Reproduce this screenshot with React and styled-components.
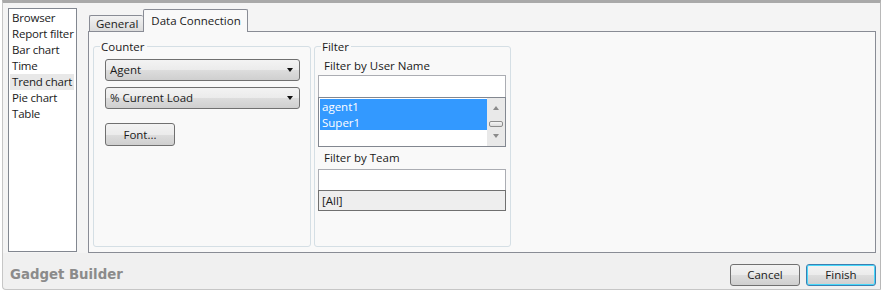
import React from 'react'
import styled, { createGlobalStyle, css } from 'styled-components'

const GlobalStyle = createGlobalStyle`
  html, body {
    margin: 0;
    padding: 0;
    background: #ffffff;
  }
  body {
    font-family: "Open Sans", "Noto Sans", sans-serif;
    font-size: 11.5px;
    color: #1a1a1a;
  }
`

const gradientControl = css`
  background: linear-gradient(#f3f3f3 0%, #ebebeb 50%, #dddddd 51%, #cfcfcf 100%);
  border: 1px solid #707070;
  border-radius: 3px;
  box-sizing: border-box;
`

const Window = styled.div`
  margin-left: 2px;
  width: 879px;
  height: 290px;
  box-sizing: border-box;
  border-top: 3px solid #a9a9a9;
  border-left: 1px solid #c6c6c6;
  border-right: 1px solid #b8b8b8;
  border-bottom: 1px solid #c6c6c6;
  border-bottom-left-radius: 4px;
  background: #f0f0f0;
  display: flex;
  flex-direction: column;
`

const Main = styled.div`
  display: flex;
  align-items: flex-start;
  padding: 5px 4px 0 5px;
  background: #f4f4f4;
`

const NavList = styled.ul`
  list-style: none;
  margin: 0;
  padding: 1px 1px;
  width: 69px;
  height: 244px;
  box-sizing: border-box;
  background: #ffffff;
  border: 1px solid #828790;
  overflow: hidden;
`

const NavItem = styled.li`
  height: 16px;
  line-height: 16px;
  padding-left: 2px;
  white-space: nowrap;
  letter-spacing: -0.2px;
  background: ${p => (p.$active ? '#e8e8e8' : 'transparent')};
  margin-right: 1px;
`

const TabArea = styled.div`
  margin-left: 11px;
  width: 788px;
  display: flex;
  flex-direction: column;
`

const TabStrip = styled.div`
  display: flex;
  align-items: flex-end;
  height: 23px;
  padding-left: 1px;
`

const Tab = styled.div`
  box-sizing: border-box;
  border: 1px solid #898c95;
  border-bottom: none;
  border-radius: 2px 2px 0 0;
  white-space: nowrap;
  ${p =>
    p.$selected
      ? css`
          height: 23px;
          padding: 2px 6px 0 7px;
          background: #f9f9f9;
          margin-bottom: -1px;
          position: relative;
          z-index: 1;
          line-height: 18px;
        `
      : css`
          height: 16px;
          padding: 0 5px 0 6px;
          background: linear-gradient(#f2f2f2, #dcdcdc);
          border-right: none;
          line-height: 15px;
        `}
`

const Panel = styled.div`
  height: 222px;
  box-sizing: border-box;
  border: 1px solid #898c95;
  background: #f9f9f9;
  display: flex;
  gap: 3px;
  padding: 7px 4px 5px 4px;
`

const Group = styled.fieldset`
  margin: 0;
  padding: 0;
  width: ${p => p.$width}px;
  box-sizing: border-box;
  border: 1px solid #d5dfe5;
  border-radius: 3px;
  min-width: 0;
`

const Legend = styled.legend`
  margin-left: 6px;
  padding: 0 2px 0 1px;
  line-height: 15px;
`

const GroupBody = styled.div`
  display: flex;
  flex-direction: column;
  padding: ${p => p.$pad};
`

const Combo = styled.div`
  ${gradientControl};
  height: 22px;
  display: flex;
  align-items: center;
  justify-content: space-between;
  padding: 0 6px 0 4px;
  margin-bottom: ${p => p.$gap || 0}px;
  line-height: 20px;
`

const Arrow = styled.span`
  width: 0;
  height: 0;
  border-left: 3.5px solid transparent;
  border-right: 3.5px solid transparent;
  border-top: 4px solid #111;
`

const Button = styled.button`
  ${gradientControl};
  width: 70px;
  height: ${p => p.$h || 22}px;
  font: inherit;
  color: #1a1a1a;
  padding: 0;
  cursor: pointer;
  ${p =>
    p.$default &&
    css`
      border-color: #3c7fb1;
      box-shadow: inset 0 0 0 1px #48d8fa;
    `}
`

const FieldLabel = styled.div`
  padding-left: 6px;
  height: ${p => p.$h || 18}px;
  line-height: ${p => p.$h || 18}px;
`

const TextBox = styled.div`
  height: ${p => p.$h || 22}px;
  box-sizing: border-box;
  background: #ffffff;
  border: 1px solid #abadb3;
  border-bottom: none;
`

const ListBox = styled.div`
  height: 50px;
  box-sizing: border-box;
  border: 1px solid #828790;
  background: #ffffff;
  display: flex;
`

const ListItems = styled.div`
  flex: 1;
  padding: 1px 0 0 1px;
`

const ListRow = styled.div`
  height: 15.5px;
  line-height: 15.5px;
  padding-left: 2px;
  background: ${p => (p.$selected ? '#3399ff' : 'transparent')};
  color: ${p => (p.$selected ? '#ffffff' : '#1a1a1a')};
`

const ScrollBar = styled.div`
  width: 18px;
  background: #e9e9e9;
  display: flex;
  flex-direction: column;
  align-items: center;
  justify-content: space-between;
  padding: 8px 0 8px;
  box-sizing: border-box;
`

const ScrollArrow = styled.span`
  width: 0;
  height: 0;
  border-left: 3.5px solid transparent;
  border-right: 3.5px solid transparent;
  ${p =>
    p.$up
      ? css`border-bottom: 4px solid #8a8a8a;`
      : css`border-top: 4px solid #8a8a8a;`}
`

const Thumb = styled.span`
  width: 14px;
  height: 6px;
  margin-top: 4px;
  box-sizing: border-box;
  border: 1px solid #8d8d8d;
  border-radius: 2px;
  background: linear-gradient(#f6f6f6, #dcdcdc);
`

const ComboValue = styled.div`
  height: 21px;
  box-sizing: border-box;
  border: 1px solid #707070;
  background: #eeeeee;
  padding-left: 3px;
  line-height: 19px;
`

const Footer = styled.div`
  flex: 1;
  display: flex;
  align-items: center;
  justify-content: space-between;
  padding: 7px 4px 0 7px;
`

const Title = styled.div`
  font-family: "DejaVu Sans", sans-serif;
  font-weight: bold;
  font-size: 13.3px;
  color: #8b8b8b;
`

const Buttons = styled.div`
  display: flex;
  gap: 6px;
`

const navItems = ['Browser', 'Report filter', 'Bar chart', 'Time', 'Trend chart', 'Pie chart', 'Table']

const App = () => {
  return (
    <>
      <GlobalStyle />
      <Window>
        <Main>
          <NavList>
            {navItems.map(item => (
              <NavItem key={item} $active={item === 'Trend chart'}>{item}</NavItem>
            ))}
          </NavList>
          <TabArea>
            <TabStrip>
              <Tab>General</Tab>
              <Tab $selected>Data Connection</Tab>
            </TabStrip>
            <Panel>
              <Group $width={218}>
                <Legend>Counter</Legend>
                <GroupBody $pad="5px 10px 0 11px">
                  <Combo $gap={6}>
                    <span>Agent</span>
                    <Arrow />
                  </Combo>
                  <Combo $gap={14}>
                    <span>% Current Load</span>
                    <Arrow />
                  </Combo>
                  <Button $h={23}>Font...</Button>
                </GroupBody>
              </Group>
              <Group $width={197}>
                <Legend>Filter</Legend>
                <GroupBody $pad="3px 4px 0 3px">
                  <FieldLabel>Filter by User Name</FieldLabel>
                  <TextBox />
                  <ListBox>
                    <ListItems>
                      <ListRow $selected>agent1</ListRow>
                      <ListRow $selected>Super1</ListRow>
                    </ListItems>
                    <ScrollBar>
                      <ScrollArrow $up />
                      <Thumb />
                      <ScrollArrow />
                    </ScrollBar>
                  </ListBox>
                  <FieldLabel $h={22}>Filter by Team</FieldLabel>
                  <TextBox $h={21} />
                  <ComboValue>[All]</ComboValue>
                </GroupBody>
              </Group>
            </Panel>
          </TabArea>
        </Main>
        <Footer>
          <Title>Gadget Builder</Title>
          <Buttons>
            <Button>Cancel</Button>
            <Button $default>Finish</Button>
          </Buttons>
        </Footer>
      </Window>
    </>
  )
}

export default App
